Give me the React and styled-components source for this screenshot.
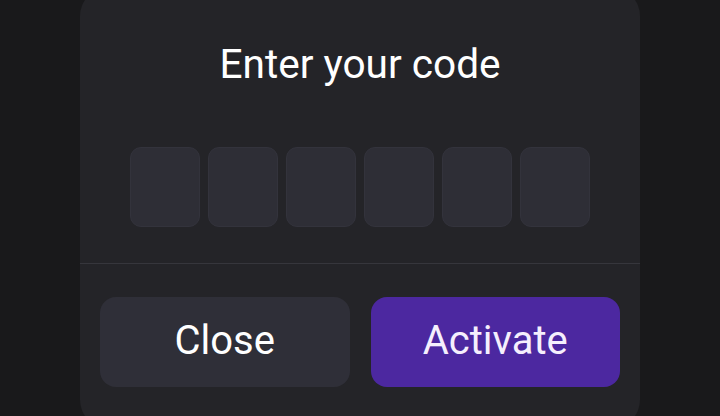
import React from "react";
import styled, { createGlobalStyle } from "styled-components";

const Global = createGlobalStyle`
  html, body { margin: 0; padding: 0; background: #19191b; }
  body { font-family: Roboto, "Noto Sans", sans-serif; }
`;

const Page = styled.div`
  width: 720px;
  height: 416px;
  overflow: hidden;
  display: flex;
  justify-content: center;
  background: #19191b;
`;

const Card = styled.div`
  width: 560px;
  height: 440px;
  margin-top: -12px;
  flex-shrink: 0;
  background: #242428;
  border-radius: 28px;
  display: flex;
  flex-direction: column;
  box-sizing: border-box;
  padding-top: 52px;
`;

const Title = styled.h1`
  margin: 0;
  font-size: 40.6px;
  line-height: 48px;
  font-weight: 400;
  color: #ffffff;
  text-align: center;
`;

const CodeRow = styled.div`
  display: flex;
  justify-content: center;
  gap: 8px;
  margin-top: 59px;
  padding-bottom: 36px;
`;

const CodeBox = styled.div`
  width: 70px;
  height: 80px;
  box-sizing: border-box;
  border-radius: 11px;
  background: #2e2e36;
  border: 1px solid #33333c;
`;

const Divider = styled.div`
  height: 1px;
  background: #36363c;
`;

const Actions = styled.div`
  display: flex;
  gap: 21px;
  padding: 33px 20px 0;
`;

const Button = styled.button`
  flex: 1;
  height: 90px;
  border: none;
  border-radius: 16px;
  font-family: Roboto, sans-serif;
  font-size: 40px;
  font-weight: 400;
  padding: 0 0 4px;
  background: ${(p) => (p.$primary ? "#4c28a0" : "#2f2f38")};
  color: ${(p) => (p.$primary ? "#f5effd" : "#ffffff")};
`;

export default function App() {
  return (
    <>
      <Global />
      <Page>
        <Card>
          <Title>Enter your code</Title>
          <CodeRow>
            {Array.from({ length: 6 }).map((_, i) => (
              <CodeBox key={i} />
            ))}
          </CodeRow>
          <Divider />
          <Actions>
            <Button>Close</Button>
            <Button $primary>Activate</Button>
          </Actions>
        </Card>
      </Page>
    </>
  );
}
